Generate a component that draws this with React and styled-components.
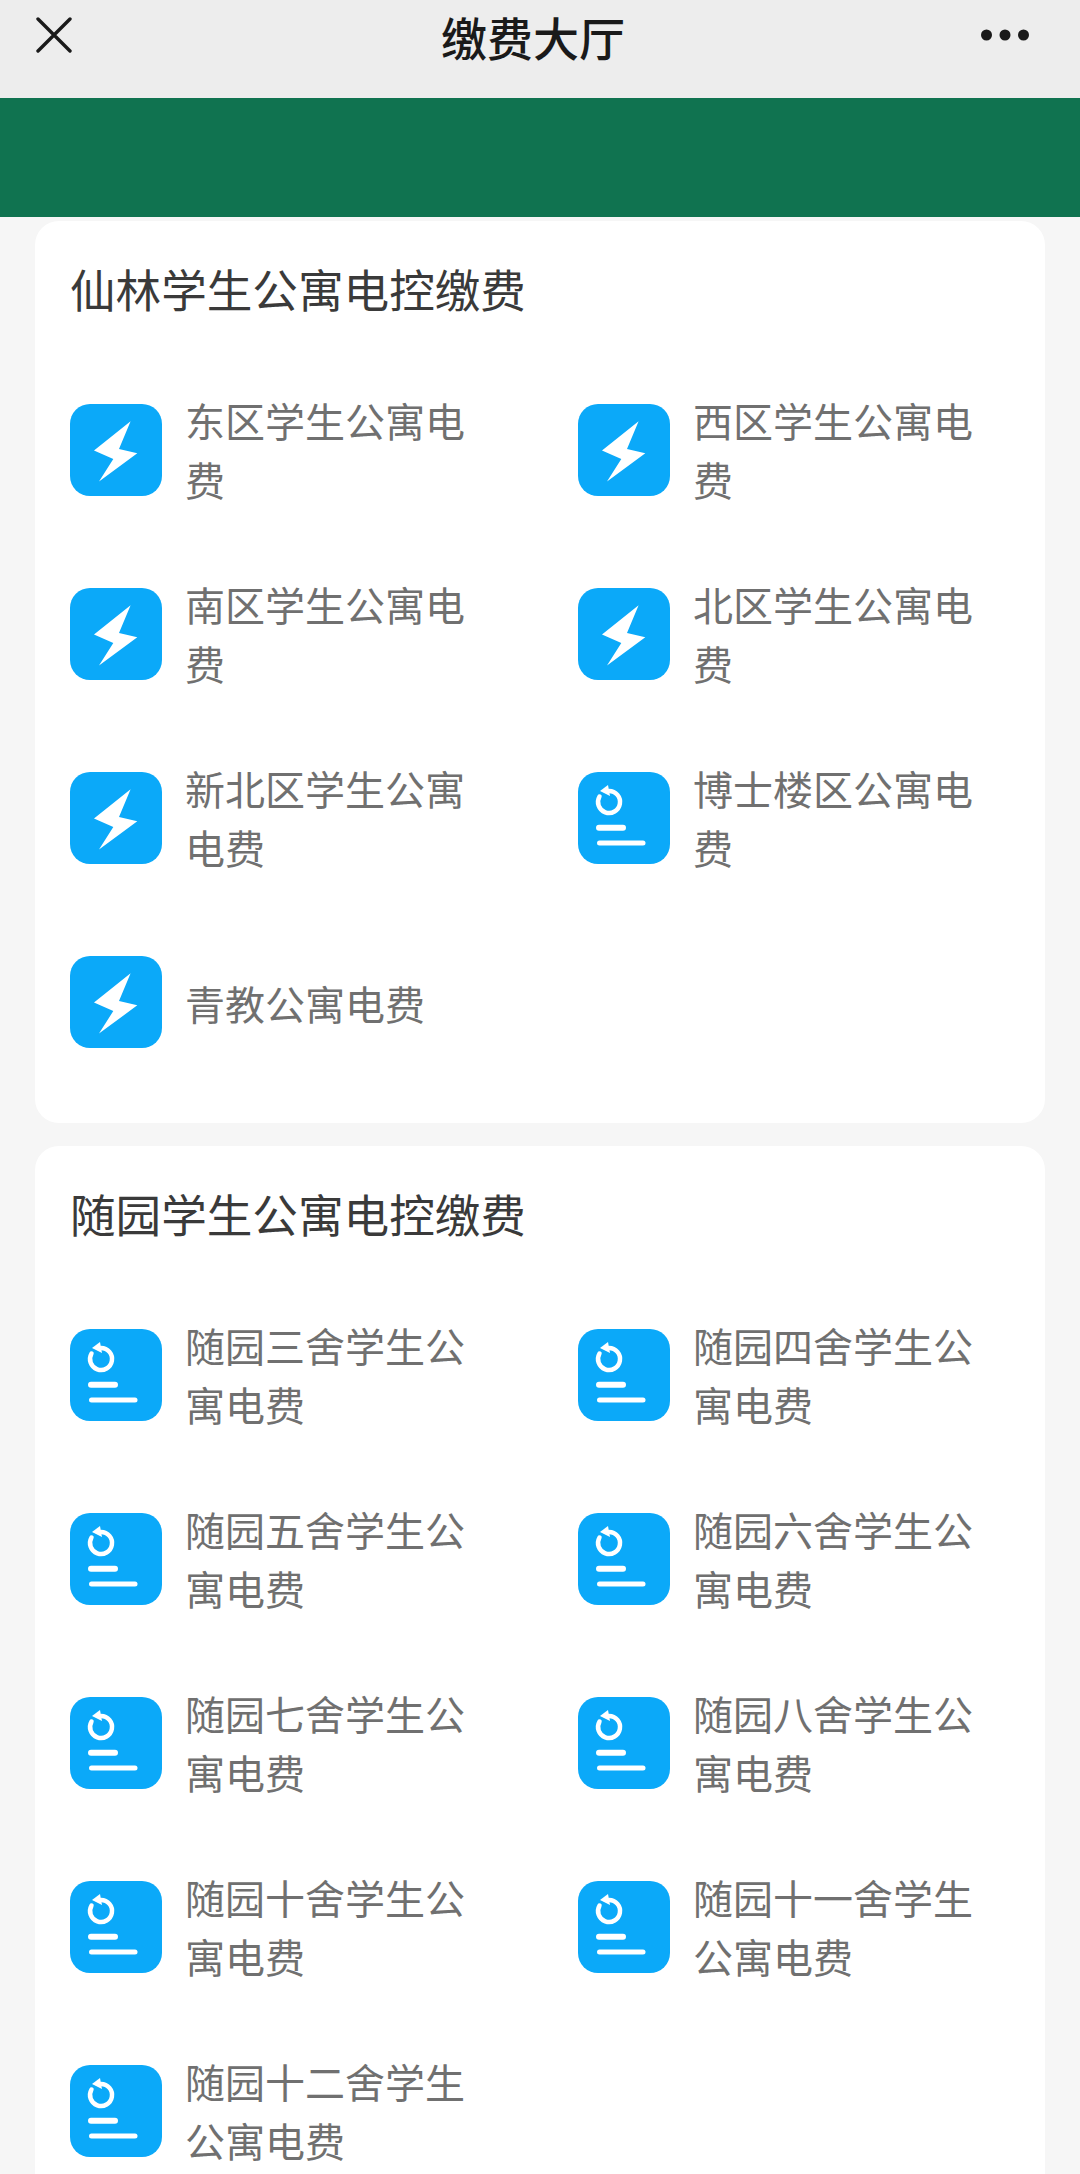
import React from "react";
import styled, { createGlobalStyle } from "styled-components";

const xianlin = [
  ["东区学生公寓电费", "bolt"],
  ["西区学生公寓电费", "bolt"],
  ["南区学生公寓电费", "bolt"],
  ["北区学生公寓电费", "bolt"],
  ["新北区学生公寓电费", "bolt"],
  ["博士楼区公寓电费", "bill"],
  ["青教公寓电费", "bolt"],
];

const suiyuan = [
  "随园三舍学生公寓电费",
  "随园四舍学生公寓电费",
  "随园五舍学生公寓电费",
  "随园六舍学生公寓电费",
  "随园七舍学生公寓电费",
  "随园八舍学生公寓电费",
  "随园十舍学生公寓电费",
  "随园十一舍学生公寓电费",
  "随园十二舍学生公寓电费",
].map(name => [name, "bill"]);

const GlobalStyle = createGlobalStyle`
  html, body {
    margin: 0;
    padding: 0;
    background: #f6f6f6;
  }
  body {
    font-family: "Noto Sans CJK SC", "Liberation Sans", sans-serif;
  }
`;

const Page = styled.div`
  width: 1080px;
  height: 2174px;
  overflow: hidden;
  background: #f6f6f6;
`;

const NavBar = styled.header`
  height: 98px;
  background: #ededed;
  display: flex;
  align-items: flex-start;
  justify-content: space-between;
  padding: 0 51px 0 36px;
  box-sizing: border-box;
`;

const NavButton = styled.div`
  height: 70px;
  display: flex;
  align-items: center;
  justify-content: center;
`;

const NavTitle = styled.h1`
  margin: 0 0 0 13px;
  font-size: 46px;
  line-height: 72px;
  font-weight: 500;
  color: #1a1a1a;
`;

const Banner = styled.div`
  height: 119px;
  background: #107350;
`;

const Content = styled.main`
  display: flex;
  flex-direction: column;
  gap: 23px;
  padding: 4px 35px 0;
`;

const Card = styled.section`
  background: #fff;
  border-radius: 24px;
  padding: 35px 35px 75px;
`;

const CardTitle = styled.h2`
  margin: 0 0 84px;
  font-size: 45.6px;
  line-height: 64px;
  font-weight: 400;
  color: #3a3a3a;
`;

const Grid = styled.div`
  display: grid;
  grid-template-columns: 508px 1fr;
  grid-auto-rows: 92px;
  row-gap: 92px;
`;

const Item = styled.div`
  display: flex;
  align-items: flex-start;
  gap: 23px;
`;

const IconBox = styled.div`
  width: 92px;
  height: 92px;
  flex: none;
  border-radius: 20px;
  background: #0ba9f9;
  display: flex;
  align-items: center;
  justify-content: center;
`;

const ItemText = styled.div`
  width: 285px;
  font-size: 40px;
  line-height: 59px;
  color: #707070;
  margin-top: ${props => (props.$single ? "18px" : "-13px")};
`;

const CloseIcon = () => (
  <svg width="36" height="36" viewBox="0 0 36 36" fill="none" stroke="#1a1a1a" strokeWidth="3.4" strokeLinecap="round">
    <path d="M2 2 L34 34 M34 2 L2 34" />
  </svg>
);

const MoreIcon = () => (
  <svg width="48" height="12" viewBox="0 0 48 12" fill="#1a1a1a">
    <circle cx="5.5" cy="6" r="5.5" />
    <circle cx="24" cy="6" r="5.5" />
    <circle cx="42.5" cy="6" r="5.5" />
  </svg>
);

const BoltIcon = () => (
  <svg width="92" height="92" viewBox="0 0 92 92" fill="#fff">
    <path d="M60.6 17.3 L24 46.6 L43.3 55 L29 77.6 L67.3 49.3 L49 45 Z" />
  </svg>
);

const BillIcon = () => (
  <svg width="92" height="92" viewBox="0 0 92 92" fill="none" stroke="#fff" strokeLinecap="round">
    <path d="M31 19 A11 11 0 1 1 21.5 24.5" strokeWidth="4.5" />
    <path d="M30 13 L32 24 L22 19 Z" fill="#fff" stroke="none" />
    <path d="M21 55.7 H45" strokeWidth="6" />
    <path d="M21.5 71 H65" strokeWidth="5" />
  </svg>
);

const Section = ({ title, items }) => (
  <Card>
    <CardTitle>{title}</CardTitle>
    <Grid>
      {items.map(([name, icon]) => (
        <Item key={name}>
          <IconBox>{icon === "bolt" ? <BoltIcon /> : <BillIcon />}</IconBox>
          <ItemText $single={name.length <= 7}>{name}</ItemText>
        </Item>
      ))}
    </Grid>
  </Card>
);

const App = () => (
  <Page>
    <GlobalStyle />
    <NavBar>
      <NavButton>
        <CloseIcon />
      </NavButton>
      <NavTitle>缴费大厅</NavTitle>
      <NavButton>
        <MoreIcon />
      </NavButton>
    </NavBar>
    <Banner />
    <Content>
      <Section title="仙林学生公寓电控缴费" items={xianlin} />
      <Section title="随园学生公寓电控缴费" items={suiyuan} />
    </Content>
  </Page>
);

export default App;
